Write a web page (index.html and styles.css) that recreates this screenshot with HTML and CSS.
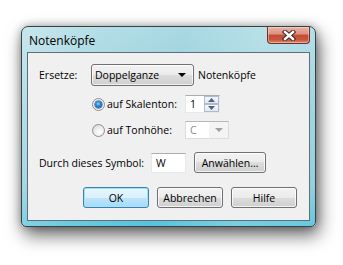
FILE: index.html
```html
<!DOCTYPE html>
<html lang="de">
<head>
<meta charset="utf-8">
<title>Notenköpfe</title>
<link rel="stylesheet" href="styles.css">
</head>
<body>
<div class="window">
  <div class="titlebar">
    <span class="title">Notenköpfe</span>
    <div class="close">
      <svg width="14" height="11" viewBox="0 0 14 11">
        <path d="M3 2 L11 9 M11 2 L3 9" stroke="#3b2a2a" stroke-width="4.4" stroke-linecap="square" fill="none"/>
        <path d="M3 2 L11 9 M11 2 L3 9" stroke="#ffffff" stroke-width="2.4" stroke-linecap="square" fill="none"/>
      </svg>
    </div>
  </div>
  <div class="client">
    <div class="row r1">
      <span class="lbl lbl-ersetze">Ersetze:</span>
      <div class="combo"><span class="combo-text">Doppelganze</span><span class="arrow"></span></div>
      <span class="after">Notenköpfe</span>
    </div>
    <div class="row r2">
      <div class="opt"><span class="radio checked"><span class="dot"></span></span><span class="opt-text">auf Skalenton:</span></div>
      <div class="spin">
        <span class="spin-text">1</span>
        <div class="spin-btns">
          <span class="sb up"><svg width="7" height="4" viewBox="0 0 7 4"><path d="M0 4 L3.5 0 L7 4 Z" fill="#4d6185"/></svg></span>
          <span class="sb down"><svg width="7" height="4" viewBox="0 0 7 4"><path d="M0 0 L3.5 4 L7 0 Z" fill="#4d6185"/></svg></span>
        </div>
      </div>
    </div>
    <div class="row r3">
      <div class="opt"><span class="radio"></span><span class="opt-text">auf Tonhöhe:</span></div>
      <div class="dcombo"><span class="dcombo-text">C</span><span class="darrow"></span></div>
    </div>
    <div class="row r4">
      <span class="lbl lbl-symbol">Durch dieses Symbol:</span>
      <div class="edit">W</div>
      <div class="btn btn-select">Anwählen…</div>
    </div>
    <div class="row r5">
      <div class="btn btn-main default">OK</div>
      <div class="btn btn-main">Abbrechen</div>
      <div class="btn btn-main">Hilfe</div>
    </div>
  </div>
</div>
</body>
</html>
```
FILE: styles.css
```css
* { box-sizing: border-box; }
html, body { margin: 0; padding: 0; background: #ffffff; }
body {
  width: 343px;
  height: 265px;
  overflow: hidden;
  padding: 26px 0 0 21px;
  font-family: "Open Sans", "Noto Sans", sans-serif;
  font-size: 10.5px;
  color: #000;
}

.window {
  width: 295px;
  height: 201px;
  border: 1px solid #34424a;
  border-radius: 7px 7px 5px 5px;
  background:
    linear-gradient(100deg, rgba(255,255,255,0.35) 0%, rgba(255,255,255,0.12) 25%, rgba(255,255,255,0) 50%, rgba(255,255,255,0.2) 75%, rgba(255,255,255,0.1) 100%),
    linear-gradient(to bottom, #a9d9e3 0%, #97cfdb 40%, #86c9d8 80%, #55c2da 100%);
  box-shadow: 3px 8px 18px rgba(0,0,0,0.6), 0 0 8px rgba(0,0,0,0.3);
  padding: 0 5px 5px 5px;
  display: flex;
  flex-direction: column;
}

.titlebar {
  height: 25px;
  display: flex;
  justify-content: space-between;
  align-items: flex-start;
  flex: none;
}
.title {
  font-size: 12px;
  margin-top: 7px;
  margin-left: 2px;
  color: #000;
  line-height: 14px;
}
.close {
  width: 43px;
  height: 17px;
  border: 1px solid #6a3228;
  border-top: none;
  border-radius: 0 0 4px 4px;
  background: linear-gradient(to bottom, #e9b3a6 0%, #dc907f 45%, #c54a33 50%, #c9563e 80%, #dd8a6c 100%);
  box-shadow: inset 0 0 0 1px rgba(255,255,255,0.35);
  display: flex;
  align-items: center;
  justify-content: center;
}
.close svg { display: block; }

.client {
  flex: 1;
  background: #f0f0f0;
  border: 1px solid #5e6f7c;
  display: flex;
  flex-direction: column;
}

.row {
  display: flex;
  align-items: center;
  flex: none;
}
.r1 { margin-top: 11px; height: 22px; padding-left: 11px; }
.r2 { margin-top: 9px; height: 18px; padding-left: 64px; }
.r3 { margin-top: 8px; height: 18px; padding-left: 64px; }
.r4 { margin-top: 13px; height: 21px; padding-left: 11px; }
.r5 { margin-top: 14px; height: 21px; padding-left: 55px; gap: 8px; }

.lbl-ersetze { width: 52px; }
.lbl-symbol { width: 112px; }

.combo {
  width: 103px;
  height: 22px;
  border: 1px solid #707070;
  border-radius: 3px;
  background: linear-gradient(to bottom, #f2f2f2 0%, #ebebeb 50%, #dddddd 50%, #cfcfcf 100%);
  box-shadow: inset 0 0 0 1px rgba(255,255,255,0.7);
  display: flex;
  align-items: center;
  justify-content: space-between;
  padding: 0 7px 0 3px;
}
.arrow {
  width: 0; height: 0;
  border-left: 4px solid transparent;
  border-right: 4px solid transparent;
  border-top: 4px solid #000;
}
.after { margin-left: 4px; }

.opt { width: 93px; display: flex; align-items: center; }
.radio {
  width: 13px; height: 13px;
  border-radius: 50%;
  border: 1px solid #8e8f8f;
  background: radial-gradient(circle at 60% 65%, #ffffff 0%, #f0f0f0 40%, #cfcfcf 100%);
  display: flex; align-items: center; justify-content: center;
  flex: none;
}
.radio.checked { background: radial-gradient(circle at 50% 50%, #e6e6e6 0%, #f6f6f6 100%); }
.dot {
  width: 7px; height: 7px; border-radius: 50%;
  background: radial-gradient(circle at 45% 40%, #9cd7ff 0%, #2c8fde 35%, #0d4d8f 100%);
  box-shadow: 0 0 0 0.5px #1c3f6a;
}
.opt-text { margin-left: 2px; }

.spin {
  width: 35px; height: 18px;
  background: #fff;
  border: 1px solid #e3e9ef;
  border-top-color: #abadb3;
  display: flex;
  align-items: center;
  justify-content: space-between;
  padding-left: 4px;
}
.spin-btns { display: flex; flex-direction: column; width: 15px; height: 16px; }
.sb {
  flex: 1;
  border: 1px solid #b1bccb;
  background: linear-gradient(to bottom, #f6f8fb, #e2e8ef);
  display: flex; align-items: center; justify-content: center;
}
.sb svg { display: block; }

.dcombo {
  width: 44px; height: 18px;
  border: 1px solid #d9dde2;
  border-top-color: #b5b8bc;
  background: linear-gradient(to right, #ffffff 0%, #ffffff 55%, #f4f4f4 55%);
  display: flex; align-items: center; justify-content: space-between;
  padding: 0 5px 0 4px;
  color: #8d8d8d;
}
.darrow {
  width: 0; height: 0;
  border-left: 4px solid transparent;
  border-right: 4px solid transparent;
  border-top: 4px solid #a0a0a0;
}

.edit {
  width: 35px; height: 20px;
  background: #fff;
  border: 1px solid #e3e9ef;
  border-top-color: #abadb3;
  padding-left: 4px;
  display: flex; align-items: center;
}

.btn {
  height: 21px;
  border: 1px solid #707070;
  border-radius: 3px;
  background: linear-gradient(to bottom, #f2f2f2 0%, #ebebeb 50%, #dddddd 50%, #cfcfcf 100%);
  box-shadow: inset 0 0 0 1px rgba(255,255,255,0.75);
  display: flex; align-items: center; justify-content: center;
}
.btn-select { width: 72px; margin-left: 8px; }
.btn-main { width: 66px; }
.btn.default {
  border-color: #3c7fb1;
  background: linear-gradient(to bottom, #eaf6fd 0%, #d9f0fc 50%, #bee6fd 50%, #a7d9f5 100%);
  box-shadow: inset 0 0 0 1px #9fe4fb;
}
```
